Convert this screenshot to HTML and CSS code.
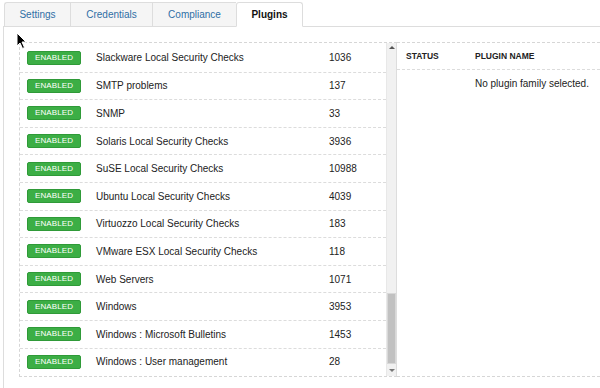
FILE: index.html
```html
<!DOCTYPE html>
<html>
<head>
<meta charset="utf-8">
<link rel="stylesheet" href="styles.css">
</head>
<body>
<div class="tabs">
  <div class="tab">Settings</div>
  <div class="tab">Credentials</div>
  <div class="tab">Compliance</div>
  <div class="tab active">Plugins</div>
  <div class="tab-fill"></div>
</div>
<div class="panel">
  <div class="families">
    <div class="list">
      <div class="row"><span class="badge">ENABLED</span><span class="name">Slackware Local Security Checks</span><span class="count">1036</span></div>
      <div class="row"><span class="badge">ENABLED</span><span class="name">SMTP problems</span><span class="count">137</span></div>
      <div class="row"><span class="badge">ENABLED</span><span class="name">SNMP</span><span class="count">33</span></div>
      <div class="row"><span class="badge">ENABLED</span><span class="name">Solaris Local Security Checks</span><span class="count">3936</span></div>
      <div class="row"><span class="badge">ENABLED</span><span class="name">SuSE Local Security Checks</span><span class="count">10988</span></div>
      <div class="row"><span class="badge">ENABLED</span><span class="name">Ubuntu Local Security Checks</span><span class="count">4039</span></div>
      <div class="row"><span class="badge">ENABLED</span><span class="name">Virtuozzo Local Security Checks</span><span class="count">183</span></div>
      <div class="row"><span class="badge">ENABLED</span><span class="name">VMware ESX Local Security Checks</span><span class="count">118</span></div>
      <div class="row"><span class="badge">ENABLED</span><span class="name">Web Servers</span><span class="count">1071</span></div>
      <div class="row"><span class="badge">ENABLED</span><span class="name">Windows</span><span class="count">3953</span></div>
      <div class="row"><span class="badge">ENABLED</span><span class="name">Windows : Microsoft Bulletins</span><span class="count">1453</span></div>
      <div class="row"><span class="badge">ENABLED</span><span class="name">Windows : User management</span><span class="count">28</span></div>
    </div>
    <div class="scrollbar">
      <div class="arrow up"></div>
      <div class="track"><div class="thumb"></div></div>
      <div class="arrow down"></div>
    </div>
  </div>
  <div class="plugins">
    <div class="phead"><span class="col-status">STATUS</span><span class="col-name">PLUGIN NAME</span></div>
    <div class="pbody"><span class="col-status"></span><span class="col-name empty">No plugin family selected.</span></div>
  </div>
  <svg class="cursor" width="12" height="18" viewBox="0 0 12 18"><path d="M1 1 L1 14 L4 11 L6.5 16.5 L8.5 15.5 L6 10 L10 10 Z" fill="#000" stroke="#fff" stroke-width="1"/></svg>
</div>
</body>
</html>
```
FILE: styles.css
```css
html, body { margin: 0; padding: 0; background: #fff; }
body { font-family: "Liberation Sans", Arial, sans-serif; color: #222; width: 600px; height: 388px; overflow: hidden; }

.tabs { display: flex; padding: 2px 0 0 4px; height: 24px; }
.tab { box-sizing: border-box; height: 25px; border: 1px solid #ddd; border-right: none; background: #f5f5f5; color: #2f6fa5; font-size: 10px; line-height: 23px; text-align: center; }
.tab:nth-child(1) { width: 66px; border-radius: 3px 0 0 0; }
.tab:nth-child(2) { width: 82px; }
.tab:nth-child(3) { width: 84px; }
.tab.active { width: 67px; background: #fff; color: #111; font-weight: bold; border-right: 1px solid #ddd; border-bottom-color: #fff; border-radius: 3px 3px 0 0; height: 25px; }
.tab-fill { flex: 1; border-bottom: 1px solid #ddd; height: 24px; }

.panel { position: relative; margin-left: 3px; border-left: 1px solid #ddd; height: 362px; padding: 16px 0 0 15px; display: flex; box-sizing: border-box; }
.families { display: flex; width: 378px; height: 335px; box-sizing: border-box; border: 1px dashed #d6d6d6; border-right: none; }
.list { width: 366px; overflow: hidden; padding-top: 1px; }
.row { display: flex; align-items: center; height: 27.6px; box-sizing: border-box; border-top: 1px dashed #dcdcdc; font-size: 10px; color: #222; }
.row:first-child { border-top: none; }
.badge { box-sizing: border-box; width: 54px; height: 14px; margin-left: 7px; background: #3cae45; border: 1px solid #2f9a38; border-radius: 2px; color: #fff; font-size: 8px; line-height: 12px; text-align: center; letter-spacing: 0.1px; }
.name { margin-left: 15px; width: 233px; white-space: nowrap; }

.scrollbar { width: 11px; box-sizing: border-box; background: #f1f1f1; border-left: 1px solid #e8e8e8; border-right: 1px solid #ddd; display: flex; flex-direction: column; }
.arrow { height: 11px; position: relative; }
.arrow.up::after { content: ""; position: absolute; left: 2px; top: 3px; border: 3px solid transparent; border-bottom: 3px solid #555; border-top: none; }
.arrow.down::after { content: ""; position: absolute; left: 2px; top: 4px; border: 3px solid transparent; border-top: 3px solid #777; border-bottom: none; }
.track { flex: 1; display: flex; flex-direction: column; justify-content: flex-end; padding-bottom: 1px; }
.thumb { height: 69px; background: #c1c1c1; border: 1px solid #d8d8d8; }

.plugins { flex: 1; min-width: 0; height: 335px; box-sizing: border-box; border-top: 1px dashed #d6d6d6; border-bottom: 1px dashed #d6d6d6; }
.phead { display: flex; align-items: center; height: 26px; border-bottom: 1px dashed #dcdcdc; font-size: 8.5px; font-weight: bold; color: #222; }
.pbody { display: flex; align-items: center; height: 27px; font-size: 10px; }
.col-status { flex: none; width: 69px; padding-left: 9px; }
.col-name { white-space: nowrap; }
.cursor { position: absolute; left: 12px; top: 6px; }
```
